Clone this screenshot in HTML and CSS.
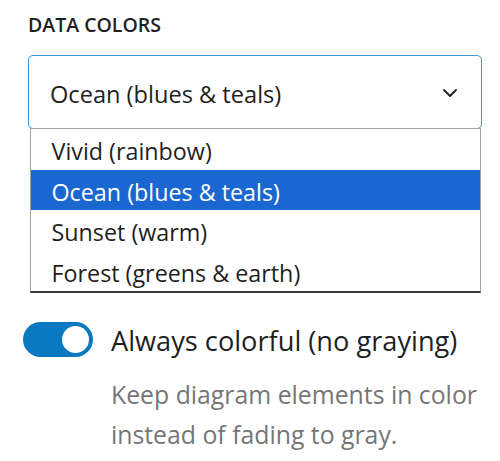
FILE: index.html
```html
<!DOCTYPE html>
<html lang="en">
<head>
<meta charset="utf-8">
<title>Data colors</title>
<link rel="stylesheet" href="styles.css">
</head>
<body>
<div class="panel">
  <div class="field">
    <div class="label">DATA COLORS</div>
    <div class="select-wrap">
      <div class="select">
        <span class="select-value">Ocean (blues &amp; teals)</span>
        <svg class="chevron" width="16" height="10" viewBox="0 0 16 10" aria-hidden="true">
          <path d="M2 2 L8 8 L14 2" fill="none" stroke="#1f1f1f" stroke-width="1.8" stroke-linecap="round" stroke-linejoin="round"/>
        </svg>
      </div>
      <ul class="listbox">
        <li class="option">Vivid (rainbow)</li>
        <li class="option selected">Ocean (blues &amp; teals)</li>
        <li class="option">Sunset (warm)</li>
        <li class="option">Forest (greens &amp; earth)</li>
      </ul>
    </div>
  </div>
  <div class="toggle-row">
    <span class="toggle"><span class="knob"></span></span>
    <span class="toggle-label">Always colorful (no graying)</span>
  </div>
  <p class="desc">Keep diagram elements in color instead of fading to gray.</p>
</div>
</body>
</html>
```
FILE: styles.css
```css
html, body {
  margin: 0;
  background: #ffffff;
}
body {
  font-family: "Open Sans", "Noto Sans", sans-serif;
  color: #1f1f1f;
}
.panel {
  padding: 0 18px 0 23px;
}
.field {
  padding-left: 5px;
}
.label {
  padding-top: 12px;
  font-size: 19.5px;
  font-weight: 600;
  line-height: 26px;
  color: #1f1f1f;
}
.select-wrap {
  position: relative;
  margin-top: 17px;
}
.select {
  box-sizing: border-box;
  height: 74px;
  border: 1px solid #3c96d8;
  border-radius: 5px;
  display: flex;
  align-items: center;
  justify-content: space-between;
  padding: 4px 23px 0 21px;
  font-size: 23.6px;
  line-height: 32px;
}
.chevron {
  display: block;
  margin-top: -2px;
}
.listbox {
  position: absolute;
  top: 100%;
  left: 1.5px;
  right: 1px;
  margin: -1px 0 0 0;
  padding: 0;
  list-style: none;
  background: #ffffff;
  border: 1px solid #a3a3a3;
  border-bottom: 2px solid #3a3a3a;
}
.option {
  height: 40.5px;
  box-sizing: border-box;
  padding: 5px 0 0 21px;
  font-size: 23.3px;
  line-height: 35.5px;
  color: #1f1f1f;
  white-space: nowrap;
}
.option.selected {
  background: #1a67d2;
  color: #ffffff;
}
.toggle-row {
  margin-top: 193px;
  display: flex;
  align-items: flex-start;
  gap: 18px;
}
.toggle {
  flex: none;
  box-sizing: border-box;
  width: 70px;
  height: 35px;
  border-radius: 18px;
  background: #0a79c1;
  display: flex;
  align-items: center;
  justify-content: flex-end;
  padding-right: 4.5px;
}
.knob {
  width: 27px;
  height: 27px;
  border-radius: 50%;
  background: #ffffff;
}
.toggle-label {
  margin-top: 1px;
  font-size: 27.2px;
  line-height: 36px;
  color: #1f1f1f;
  white-space: nowrap;
}
.desc {
  margin: 15px 0 0 88px;
  font-size: 24.8px;
  line-height: 40px;
  color: #767676;
}
```
